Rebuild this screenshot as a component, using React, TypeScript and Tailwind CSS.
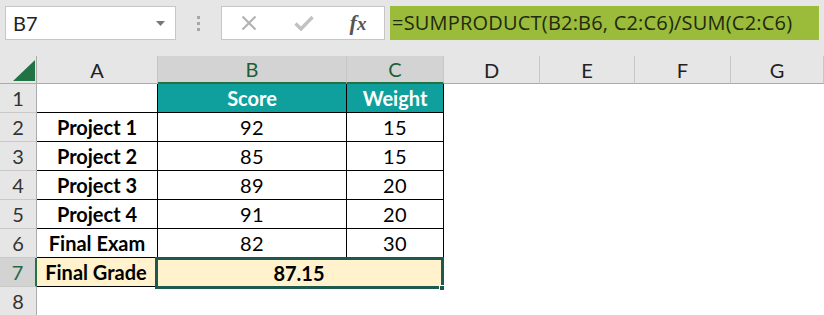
import React from "react";

const COLS = ["A", "B", "C", "D", "E", "F", "G"];
const COLW = [121, 189, 97, 96, 95, 96, 93];

type Row = { n: number; a?: string; b?: string; c?: string };
const rows: Row[] = [
  { n: 2, a: "Project 1", b: "92", c: "15" },
  { n: 3, a: "Project 2", b: "85", c: "15" },
  { n: 4, a: "Project 3", b: "89", c: "20" },
  { n: 5, a: "Project 4", b: "91", c: "20" },
  { n: 6, a: "Final Exam", b: "82", c: "30" },
];

function RowHead({ n, sel }: { n: number; sel?: boolean }) {
  return (
    <div
      className={
        "w-[37px] h-full flex items-center justify-center text-[20px] border-b border-[#c9c9c9] " +
        (sel
          ? "bg-[#d3d3d3] text-[#1e6b44] border-r-2 border-r-[#217346]"
          : "bg-[#e6e6e6] text-[#333] border-r border-r-[#ababab]")
      }
    >
      {n}
    </div>
  );
}

export default function App() {
  return (
    <div
      className="w-[824px] h-[315px] overflow-hidden bg-white relative"
      style={{ fontFamily: "Lato, 'Open Sans', sans-serif" }}
    >
      {/* top bar */}
      <div className="h-[56px] bg-[#e6e6e6] flex items-start pt-[6px]">
        <div className="ml-[5px] w-[171px] h-[34px] bg-white border border-[#c6c6c6] flex items-center justify-between pl-[7px] pr-[10px]">
          <span className="text-[20px] text-[#222]">B7</span>
          <svg width="9" height="5" viewBox="0 0 9 5">
            <path d="M0 0 L9 0 L4.5 5 Z" fill="#777" />
          </svg>
        </div>
        <div className="w-[45px] h-[34px] flex flex-col items-center justify-center gap-[3px]">
          <div className="w-[3px] h-[3px] bg-[#a6a6a6]" />
          <div className="w-[3px] h-[3px] bg-[#a6a6a6]" />
          <div className="w-[3px] h-[3px] bg-[#a6a6a6]" />
        </div>
        <div className="w-[164px] h-[34px] bg-white border border-[#c6c6c6] flex items-center">
          <div className="w-[54px] flex justify-center">
            <svg width="16" height="16" viewBox="0 0 16 16">
              <path d="M1.5 1.5 L14.5 14.5 M14.5 1.5 L1.5 14.5" stroke="#b3b3b3" strokeWidth="2.2" />
            </svg>
          </div>
          <div className="w-[56px] flex justify-center">
            <svg width="20" height="16" viewBox="0 0 20 16">
              <path d="M1.5 8.5 L7 14 L18.5 2" stroke="#c2c2c2" strokeWidth="3.4" fill="none" />
            </svg>
          </div>
          <div className="w-[52px] flex justify-center">
            <span
              className="text-[22px] italic font-bold text-[#555] leading-none"
              style={{ fontFamily: "'Liberation Serif', serif" }}
            >
              f<span className="text-[19px]">x</span>
            </span>
          </div>
        </div>
        <div className="ml-[5px] w-[429px] h-[34px] bg-[#9bbb3b] flex items-center pl-[2px]">
          <span
            className="text-[20px] text-[#1f2a10] tracking-[0.2px]"
            style={{ fontFamily: "'Open Sans', sans-serif" }}
          >
            =SUMPRODUCT(B2:B6, C2:C6)/SUM(C2:C6)
          </span>
        </div>
      </div>

      {/* column header row */}
      <div className="flex h-[28px]">
        <div className="w-[37px] h-full bg-[#e6e6e6] border-r border-[#ababab] border-b border-b-[#ababab] relative">
          <svg className="absolute left-[13px] top-[4px]" width="22" height="21" viewBox="0 0 22 21">
            <path d="M0 21 L22 21 L22 0 Z" fill="#217346" />
          </svg>
        </div>
        {COLS.map((c, i) => {
          const sel = c === "B" || c === "C";
          return (
            <div
              key={c}
              style={{ width: COLW[i] }}
              className={
                "h-full flex items-center justify-center text-[20px] border-r border-r-[#c6c6c6] " +
                (sel
                  ? "bg-[#d3d3d3] text-[#1e5e3a] border-b-2 border-b-[#217346]"
                  : "bg-[#e6e6e6] text-[#222] border-b border-b-[#ababab]")
              }
            >
              {c}
            </div>
          );
        })}
      </div>

      {/* row 1 */}
      <div className="flex h-[29px]">
        <RowHead n={1} />
        <div className="w-[121px] h-full border-r border-b border-black" />
        <div className="w-[189px] h-full border-r border-b border-black bg-[#0f9f9c] flex items-center justify-center text-white font-bold text-[20px]">
          Score
        </div>
        <div className="w-[97px] h-full border-r border-b border-black bg-[#0f9f9c] flex items-center justify-center text-white font-bold text-[20px]">
          Weight
        </div>
      </div>

      {rows.map((r) => (
        <div key={r.n} className="flex h-[29px]">
          <RowHead n={r.n} />
          <div className="w-[121px] h-full border-r border-b border-black flex items-center justify-center font-bold text-[20px] text-black">
            {r.a}
          </div>
          <div className="w-[189px] h-full border-r border-b border-black flex items-center justify-center text-[20px] text-black tracking-[0.5px]">
            {r.b}
          </div>
          <div className="w-[97px] h-full border-r border-b border-black flex items-center justify-center text-[20px] text-black tracking-[0.5px]">
            {r.c}
          </div>
        </div>
      ))}

      {/* row 7 */}
      <div className="flex h-[29px]">
        <RowHead n={7} sel />
        <div className="w-[119px] h-full border-r border-b border-black bg-[#fff2cc] flex items-center justify-center font-bold text-[20px] text-black">
          Final Grade
        </div>
        <div className="w-[286px] h-full bg-[#fff2cc] relative flex items-center justify-center font-bold text-[20px] text-black">
          87.15
          <div className="absolute left-[-1px] top-[-1px] w-[289px] h-[32px] border-[3px] border-[#1b5a4d]" />
          <div className="absolute left-[283px] top-[27px] w-[6px] h-[6px] bg-[#1b5a4d] border border-white" />
        </div>
      </div>

      {/* row 8 */}
      <div className="flex h-[29px]">
        <RowHead n={8} />
      </div>
    </div>
  );
}
